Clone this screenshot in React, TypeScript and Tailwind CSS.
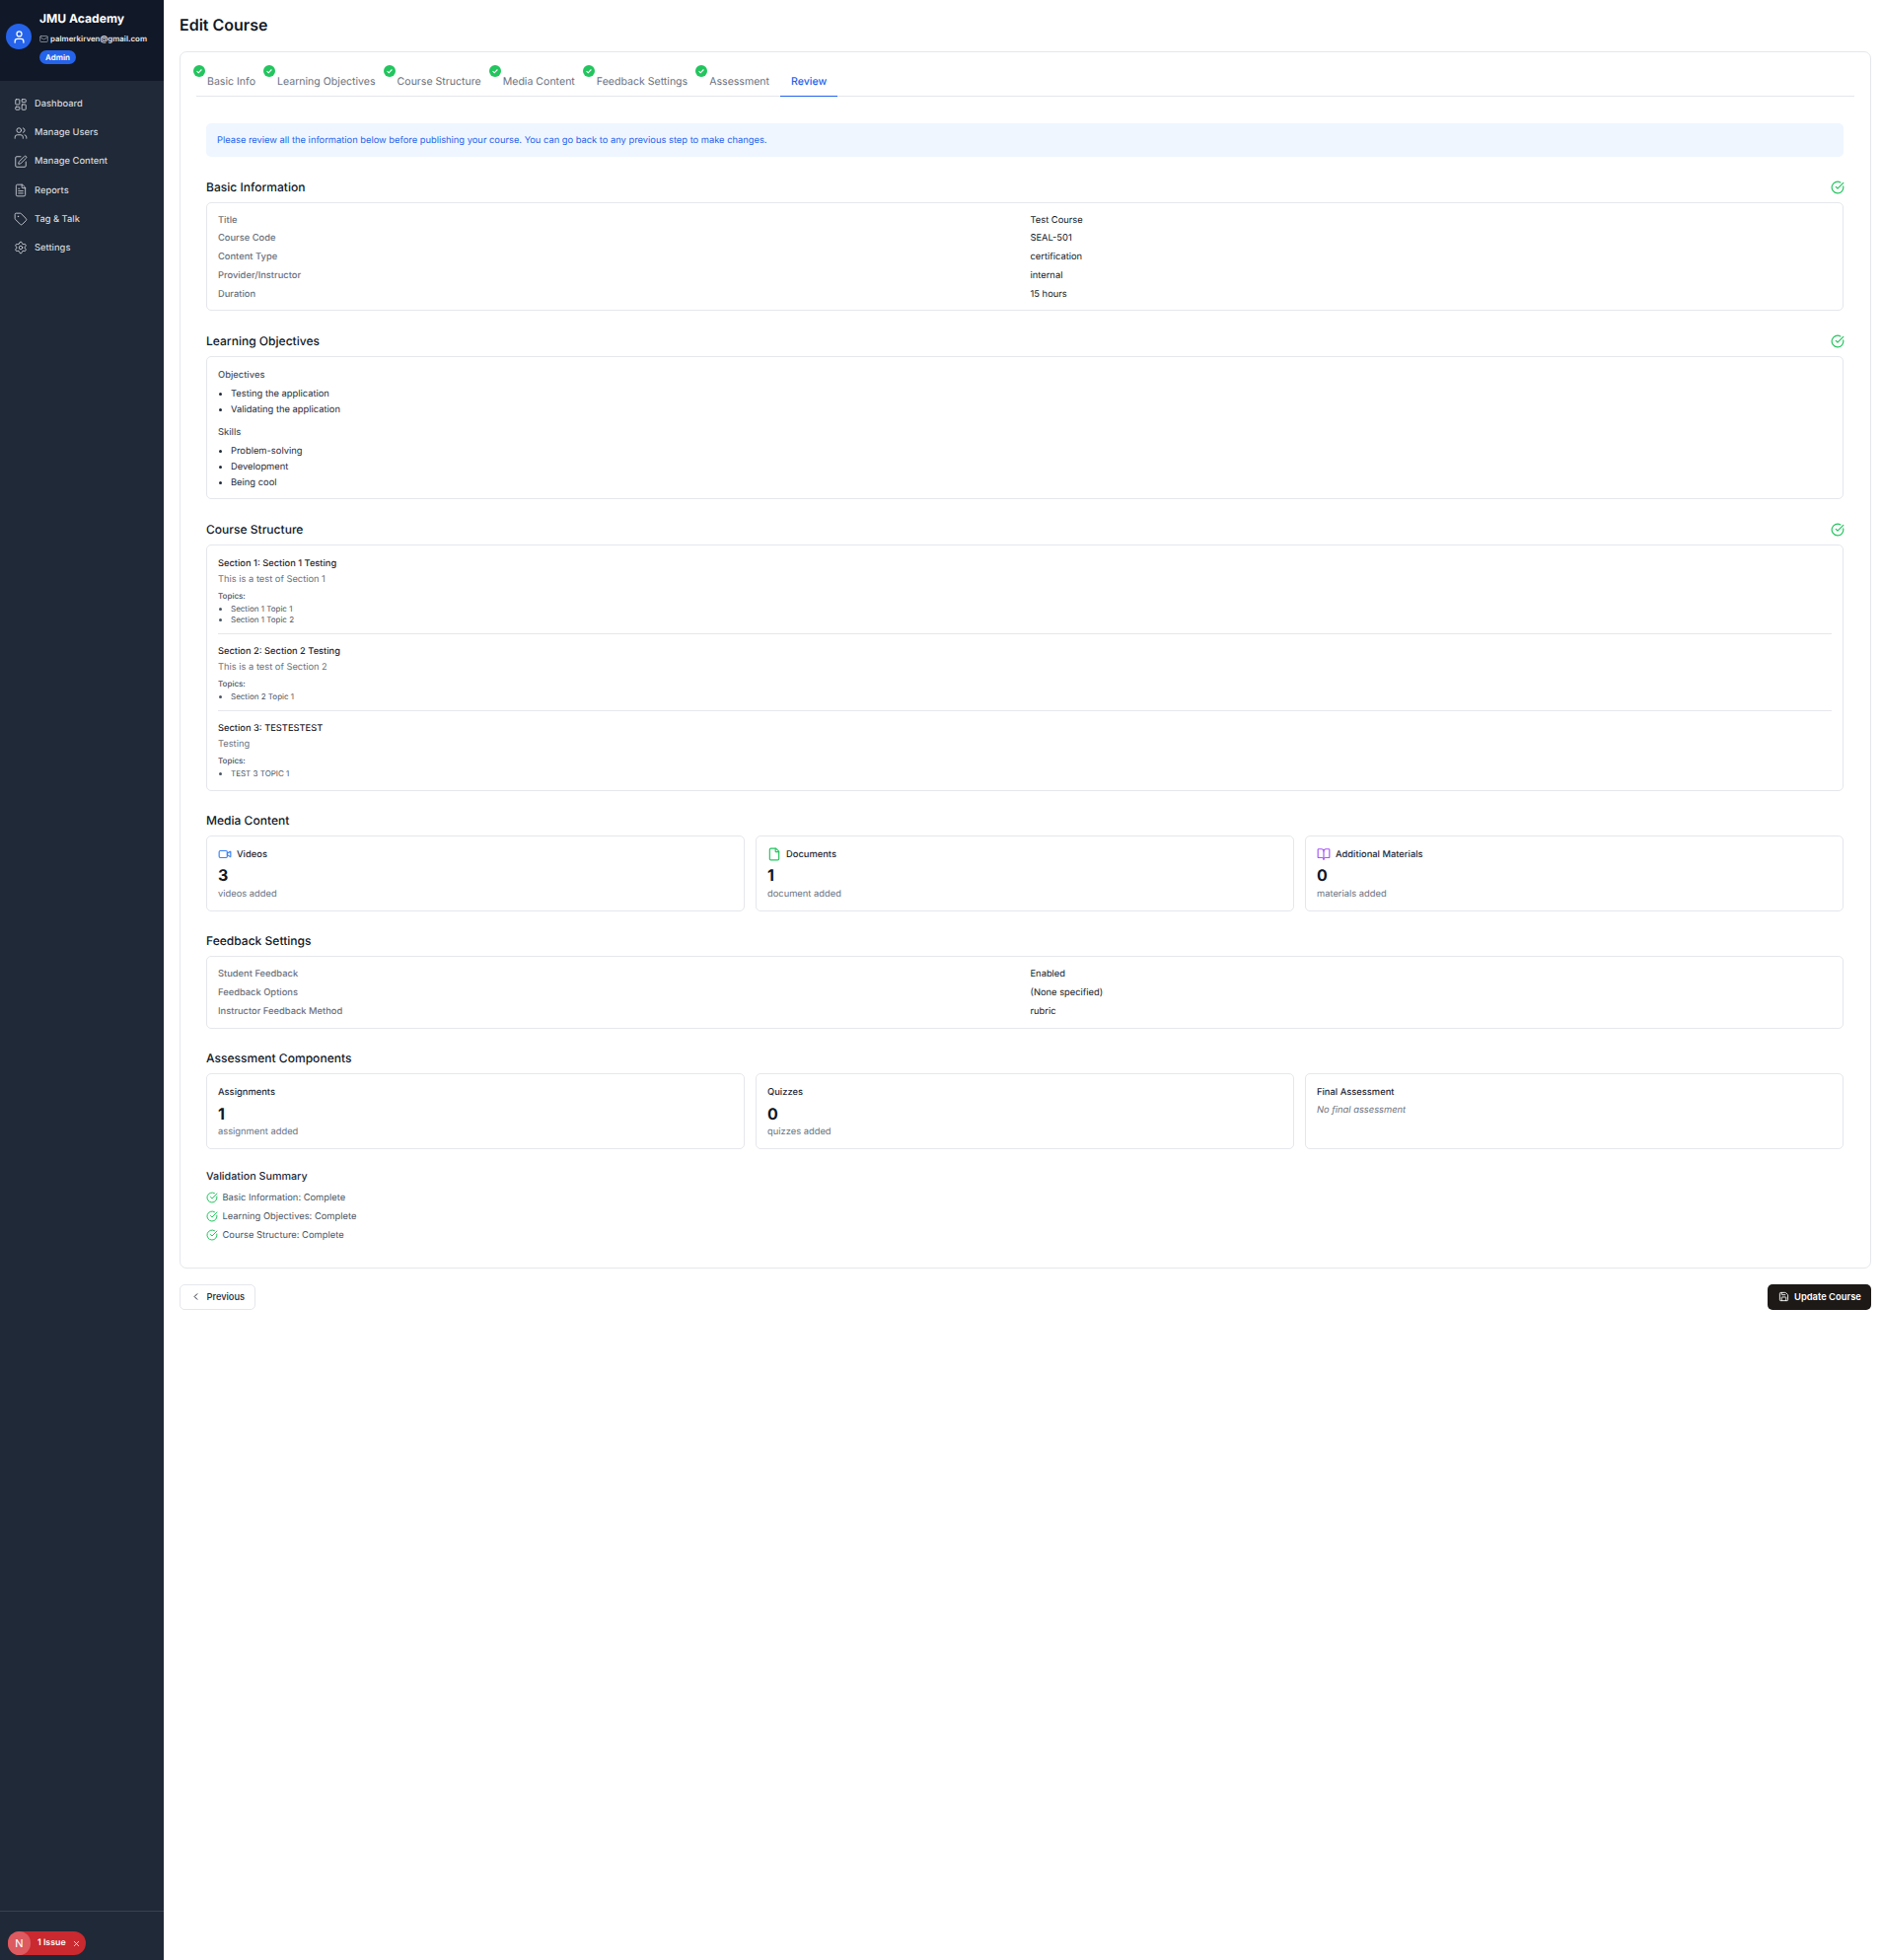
import React from "react";
import {
  LayoutDashboard,
  Users,
  SquarePen,
  FileText,
  Tag,
  Settings,
  User,
  Mail,
  CircleCheckBig,
  Video,
  File,
  BookOpen,
  ChevronLeft,
  Save,
  X,
} from "lucide-react";

const NAV_ITEMS = [
  { label: "Dashboard", icon: LayoutDashboard },
  { label: "Manage Users", icon: Users },
  { label: "Manage Content", icon: SquarePen },
  { label: "Reports", icon: FileText },
  { label: "Tag & Talk", icon: Tag },
  { label: "Settings", icon: Settings },
];

const TABS = [
  { label: "Basic Info", done: true },
  { label: "Learning Objectives", done: true },
  { label: "Course Structure", done: true },
  { label: "Media Content", done: true },
  { label: "Feedback Settings", done: true },
  { label: "Assessment", done: true },
  { label: "Review", done: false },
];

const SECTIONS = [
  {
    title: "Section 1: Section 1 Testing",
    description: "This is a test of Section 1",
    topics: ["Section 1 Topic 1", "Section 1 Topic 2"],
  },
  {
    title: "Section 2: Section 2 Testing",
    description: "This is a test of Section 2",
    topics: ["Section 2 Topic 1"],
  },
  {
    title: "Section 3: TESTESTEST",
    description: "Testing",
    topics: ["TEST 3 TOPIC 1"],
  },
];

const Heading = ({ title, checked }: { title: string; checked?: boolean }) => (
  <div className="mb-[5px] flex h-5 items-center justify-between">
    <h3 className="text-[12.05px] font-medium text-[#111827]">{title}</h3>
    {checked && <CircleCheckBig className="mr-[-1px] h-[14px] w-[14px] text-[#22c55e]" />}
  </div>
);

const InfoRows = ({ rows, tall }: { rows: [string, string][]; tall?: boolean }) => (
  <div
    className={
      tall
        ? "flex flex-col gap-[4.9px] rounded-[5px] border border-[#e5e7eb] px-[11px] pb-[8.9px] pt-[11.5px]"
        : "flex flex-col gap-[4.9px] rounded-[5px] border border-[#e5e7eb] px-[11px] pb-[8.4px] pt-[10.5px]"
    }
  >
    {rows.map(([label, value]) => (
      <div key={label} className="grid grid-cols-2 gap-[11px] text-[9.35px] leading-[14px]">
        <span className="font-medium text-[#6b7280]">{label}</span>
        <span className="text-[#111827]">{value}</span>
      </div>
    ))}
  </div>
);

const BulletList = ({ items }: { items: string[] }) => (
  <ul className="mt-[3px] list-disc pl-[13px] text-[9.35px] leading-4 text-[#1f2937]">
    {items.map((item) => (
      <li key={item}>{item}</li>
    ))}
  </ul>
);

const StatCard = ({
  label,
  value,
  note,
  icon,
}: {
  label: string;
  value?: string;
  note: string;
  icon?: React.ReactNode;
}) => (
  <div className="h-[77px] rounded-[5px] border border-[#e5e7eb] px-[11px] pb-[9.5px] pt-[11px]">
    <div className="flex h-4 items-center gap-[5px] text-[9.35px] font-medium text-[#1f2937]">
      {icon}
      {label}
    </div>
    {value ? (
      <>
        <div className="mt-[0.5px] text-[16px] font-bold leading-6 text-[#111827]">{value}</div>
        <div className="mt-[0.5px] text-[9.35px] leading-[14px] text-[#6b7280]">{note}</div>
      </>
    ) : (
      <div className="mt-[3px] text-[9.35px] italic leading-[14px] text-[#6b7280]">{note}</div>
    )}
  </div>
);

export default function App() {
  return (
    <div
      className="flex h-screen bg-white [text-rendering:geometricPrecision]"
      style={{ fontFamily: "Inter, 'Noto Sans', sans-serif" }}
    >
      {/* Sidebar */}
      <aside className="flex w-[166px] shrink-0 flex-col bg-[#1f2937]">
        <div className="flex h-[82px] items-start gap-2 bg-[#111827] pl-[6px]">
          <div className="mt-[24px] flex h-[26px] w-[26px] items-center justify-center rounded-full bg-[#2563eb] text-white">
            <User className="h-[15px] w-[15px]" />
          </div>
          <div className="mt-[10px] flex flex-col items-start">
            <div className="text-[12.1px] font-bold leading-[18px] text-white">JMU Academy</div>
            <div className="mt-[3px] flex items-center gap-[2px] text-[7.9px] font-semibold leading-4 text-[#e5e7eb]">
              <Mail className="h-[9px] w-[9px] text-[#9ca3af]" />
              palmerkirven@gmail.com
            </div>
            <span className="mt-[4px] rounded-full bg-[#2563eb] px-[6px] text-[8px] font-semibold leading-[14px] text-white">
              Admin
            </span>
          </div>
        </div>
        <nav className="mt-[17px] flex flex-col gap-[15.2px] pl-[14px]">
          {NAV_ITEMS.map(({ label, icon: Icon }) => (
            <div key={label} className="flex h-[14px] items-center gap-[7px] text-[9.35px] font-medium text-[#d1d5db]">
              <Icon className="mt-[-1px] h-[14px] w-[14px] text-[#d1d5db]" strokeWidth={1.5} />
              {label}
            </div>
          ))}
        </nav>
        <div className="mt-auto h-[50px] border-t border-[#374151] pl-2 pt-[20px]">
          <div className="flex h-[24px] w-[79px] items-center rounded-full bg-[#c9292f] text-white">
            <span className="flex h-[24px] w-[23px] items-center justify-center rounded-full bg-[#dc5a60] text-[11px]">
              N
            </span>
            <span className="ml-[7px] text-[8.8px] font-semibold">1 Issue</span>
            <X className="ml-[6px] h-[9px] w-[9px]" />
          </div>
        </div>
      </aside>

      {/* Main */}
      <main className="min-w-0 flex-1 pl-4 pr-[10px] pt-[13px]">
        <h1 className="mb-[15px] text-[16px] font-semibold leading-6 text-[#111827]">Edit Course</h1>

        <div className="rounded-[7px] border border-[#e5e7eb] px-4 pb-[15px] pt-[13px]">
          {/* Tabs */}
          <div className="flex h-[32px] border-b border-[#e5e7eb]">
            {TABS.map((tab) => (
              <div
                key={tab.label}
                className={
                  tab.done
                    ? "relative flex h-[32px] items-center border-b border-transparent px-[11px] pt-[2px] text-[10.57px] text-[#6b7280]"
                    : "relative flex h-[32px] items-center border-b border-[#2563eb] px-[11px] pt-[2px] text-[10.57px] font-medium text-[#2563eb]"
                }
              >
                {tab.done && (
                  <svg viewBox="0 0 12 12" className="absolute left-[-3px] top-0 h-[12px] w-[12px]">
                    <circle cx="6" cy="6" r="6" fill="#22c55e" />
                    <path d="M3.6 6.2 5.2 7.8 8.4 4.5" fill="none" stroke="white" strokeWidth="1.1" />
                  </svg>
                )}
                {tab.label}
              </div>
            ))}
          </div>

          <div className="pl-[10px] pr-[11px] pt-[27px]">
            <div className="mb-[21px] flex h-[34px] items-center rounded-[5px] bg-[#eff6ff] px-[11px] pt-[1px] text-[9.33px] text-[#2563eb]">
              Please review all the information below before publishing your course. You can go back to any previous step to make changes.
            </div>

            <section className="mb-[21px]">
              <Heading title="Basic Information" checked />
              <InfoRows
                rows={[
                  ["Title", "Test Course"],
                  ["Course Code", "SEAL-501"],
                  ["Content Type", "certification"],
                  ["Provider/Instructor", "internal"],
                  ["Duration", "15 hours"],
                ]}
              />
            </section>

            <section className="mb-[21px]">
              <Heading title="Learning Objectives" checked />
              <div className="rounded-[5px] border border-[#e5e7eb] px-[11px] pb-[7.25px] pt-[10.75px]">
                <div className="text-[9.35px] font-medium leading-4 text-[#4b5563]">Objectives</div>
                <BulletList items={["Testing the application", "Validating the application"]} />
                <div className="mt-[7px] text-[9.35px] font-medium leading-4 text-[#4b5563]">Skills</div>
                <BulletList items={["Problem-solving", "Development", "Being cool"]} />
              </div>
            </section>

            <section className="mb-[20px]">
              <Heading title="Course Structure" checked />
              <div className="rounded-[5px] border border-[#e5e7eb] px-[11px] pb-[9.5px] pt-[10.5px]">
                {SECTIONS.map((section, i) => (
                  <div
                    key={section.title}
                    className={i < SECTIONS.length - 1 ? "mb-[10px] border-b border-[#e5e7eb] pb-[8px]" : "pb-[1.5px]"}
                  >
                    <div className="text-[9.3px] font-medium leading-4 text-[#1f2937]">{section.title}</div>
                    <div className="text-[9.3px] leading-4 text-[#6b7280]">{section.description}</div>
                    <div className="mt-[2px] text-[8px] font-medium leading-[13px] text-[#4b5563]">Topics:</div>
                    <ul className="mt-[1px] list-disc pl-[13px] text-[8px] leading-[11px] text-[#4b5563]">
                      {section.topics.map((topic) => (
                        <li key={topic}>{topic}</li>
                      ))}
                    </ul>
                  </div>
                ))}
              </div>
            </section>

            <section className="mb-[20px]">
              <Heading title="Media Content" />
              <div className="grid grid-cols-3 gap-[11px]">
                <StatCard label="Videos" value="3" note="videos added" icon={<Video className="mt-[-1px] h-[14px] w-[14px] text-[#3b82f6]" />} />
                <StatCard label="Documents" value="1" note="document added" icon={<File className="mt-[-1px] h-[14px] w-[14px] text-[#22c55e]" />} />
                <StatCard label="Additional Materials" value="0" note="materials added" icon={<BookOpen className="mt-[-1px] h-[14px] w-[14px] text-[#a855f7]" />} />
              </div>
            </section>

            <section className="mb-[20px]">
              <Heading title="Feedback Settings" />
              <InfoRows
                tall
                rows={[
                  ["Student Feedback", "Enabled"],
                  ["Feedback Options", "(None specified)"],
                  ["Instructor Feedback Method", "rubric"],
                ]}
              />
            </section>

            <section className="mb-[18px]">
              <Heading title="Assessment Components" />
              <div className="grid grid-cols-3 gap-[11px]">
                <StatCard label="Assignments" value="1" note="assignment added" />
                <StatCard label="Quizzes" value="0" note="quizzes added" />
                <StatCard label="Final Assessment" note="No final assessment" />
              </div>
            </section>

            <section className="pb-[10px]">
              <h4 className="text-[10.75px] font-medium leading-5 text-[#1f2937]">Validation Summary</h4>
              <div className="mt-[4.5px] flex flex-col gap-[5px]">
                {["Basic Information: Complete", "Learning Objectives: Complete", "Course Structure: Complete"].map((item) => (
                  <div key={item} className="flex h-[14px] items-center gap-[4.5px] text-[9.35px] text-[#4b5563]">
                    <CircleCheckBig className="mt-[-1px] h-[12px] w-[12px] text-[#22c55e]" />
                    {item}
                  </div>
                ))}
              </div>
            </section>
          </div>
        </div>

        {/* Footer buttons */}
        <div className="mt-[16px] flex justify-between">
          <button className="flex h-[26px] w-[77px] items-center gap-[5.5px] rounded-[5px] border border-[#e5e7eb] bg-white pl-[10px] text-[9.3px] font-medium text-[#1f2937]">
            <ChevronLeft className="h-[11px] w-[11px] text-[#111827]" />
            Previous
          </button>
          <button className="flex h-[26px] w-[105px] items-center gap-[5.5px] rounded-[5px] bg-[#1c1917] pl-[10.5px] text-[9.4px] font-semibold text-white">
            <Save className="h-[11px] w-[11px]" />
            Update Course
          </button>
        </div>
      </main>
    </div>
  );
}
